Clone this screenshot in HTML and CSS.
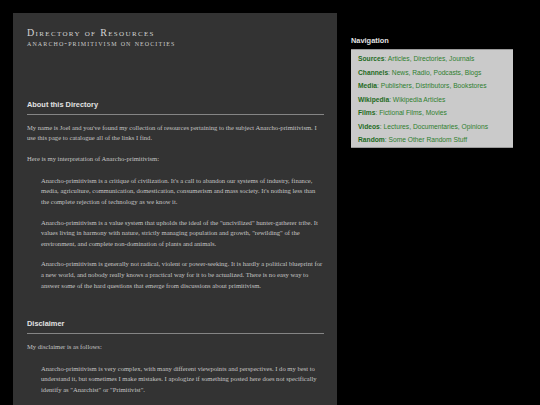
FILE: index.html
```html
<!DOCTYPE html>
<html lang="en">
<head>
<meta charset="utf-8">
<title>Directory of Resources</title>
<link rel="stylesheet" href="styles.css">
</head>
<body>
<div class="layout">
  <main class="main">
    <header class="masthead">
      <h1 class="title">Directory of Resources</h1>
      <div class="subtitle">anarcho-primitivism on neocities</div>
    </header>

    <section class="section">
      <h2 class="heading">About this Directory</h2>
      <p>My name is Joel and you've found my collection of resources pertaining to the subject Anarcho-primitivism. I use this page to catalogue all of the links I find.</p>
      <p>Here is my interpretation of Anarcho-primitivism:</p>
      <blockquote class="quote">
        <p>Anarcho-primitivism is a critique of civilization. It's a call to abandon our systems of industry, finance, media, agriculture, communication, domestication, consumerism and mass society. It's nothing less than the complete rejection of technology as we know it.</p>
        <p>Anarcho-primitivism is a value system that upholds the ideal of the "uncivilized" hunter-gatherer tribe. It values living in harmony with nature, strictly managing population and growth, "rewilding" of the environment, and complete non-domination of plants and animals.</p>
        <p>Anarcho-primitivism is generally not radical, violent or power-seeking. It is hardly a political blueprint for a new world, and nobody really knows a practical way for it to be actualized. There is no easy way to answer some of the hard questions that emerge from discussions about primitivism.</p>
      </blockquote>
    </section>

    <section class="section">
      <h2 class="heading">Disclaimer</h2>
      <p>My disclaimer is as follows:</p>
      <blockquote class="quote">
        <p>Anarcho-primitivism is very complex, with many different viewpoints and perspectives. I do my best to understand it, but sometimes I make mistakes. I apologize if something posted here does not specifically identify as "Anarchist" or "Primitivist".</p>
      </blockquote>
    </section>
  </main>

  <aside class="sidebar">
    <h2 class="nav-heading">Navigation</h2>
    <ul class="nav">
      <li><b>Sources</b>: Articles, Directories, Journals</li>
      <li><b>Channels</b>: News, Radio, Podcasts, Blogs</li>
      <li><b>Media</b>: Publishers, Distributors, Bookstores</li>
      <li><b>Wikipedia</b>: Wikipedia Articles</li>
      <li><b>Films</b>: Fictional Films, Movies</li>
      <li><b>Videos</b>: Lectures, Documentaries, Opinions</li>
      <li><b>Random</b>: Some Other Random Stuff</li>
    </ul>
  </aside>
</div>
</body>
</html>
```

FILE: styles.css
```css
html, body {
  margin: 0;
  padding: 0;
  background: #000;
}

body {
  padding: 13px 0 0 13px;
  height: 405px;
  box-sizing: border-box;
  overflow: hidden;
}

.layout {
  display: flex;
  gap: 14px;
  align-items: flex-start;
}

.main {
  width: 324px;
  min-height: 392px;
  box-sizing: border-box;
  background: #333;
  padding: 14px 13px 20px 14px;
  font-family: "Liberation Serif", "Times New Roman", serif;
  font-size: 6.6px;
  line-height: 10.6px;
  color: #c4c4c4;
}

.masthead {
  margin-bottom: 52px;
}

.title {
  margin: 0;
  font-family: "Liberation Serif", "Times New Roman", serif;
  font-weight: normal;
  font-variant: small-caps;
  font-size: 10px;
  line-height: 12px;
  letter-spacing: 1.35px;
  color: #d4d4d4;
}

.subtitle {
  font-variant: small-caps;
  font-size: 8px;
  line-height: 9px;
  letter-spacing: 1.1px;
  color: #cacaca;
}

.section {
  margin-bottom: 28px;
}

.heading {
  margin: 0 0 8px;
  padding-bottom: 4.5px;
  border-bottom: 1px solid #858585;
  font-family: "Liberation Sans", Arial, sans-serif;
  font-weight: bold;
  font-size: 7.4px;
  line-height: 9px;
  color: #e2e2e2;
}

.section p {
  margin: 0 0 10px;
}

.quote {
  margin: 11.5px 0 0 14px;
}

.sidebar {
  width: 162px;
  padding-top: 22.5px;
  font-family: "Liberation Sans", Arial, sans-serif;
}

.nav-heading {
  margin: 0;
  padding-bottom: 4.5px;
  border-bottom: 1px solid #9a9a9a;
  font-weight: bold;
  font-size: 7.4px;
  line-height: 9px;
  color: #e2e2e2;
}

.nav {
  list-style: none;
  margin: 0;
  padding: 2.2px 0 0.5px 7px;
  background: #cacaca;
  border-bottom: 1px solid #9a9a9a;
  font-size: 6.7px;
  line-height: 13.5px;
  color: #2f7f2f;
}

.nav b {
  color: #1d6a1d;
}
```
